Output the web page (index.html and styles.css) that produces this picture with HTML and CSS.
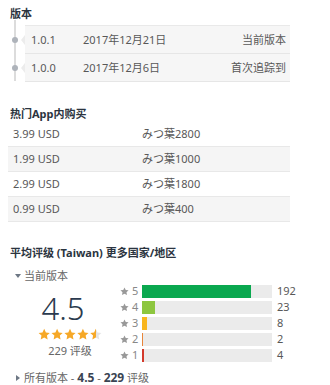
FILE: index.html
```html
<!DOCTYPE html>
<html lang="zh-CN">
<head>
    <meta charset="UTF-8">
    <title>App 详情</title>
    <link rel="stylesheet" href="styles.css">
</head>
<body>
    <div class="page">
        <section class="versions">
            <h2 class="title">版本</h2>
            <div class="timeline">
                <div class="version-row">
                    <span class="ver">1.0.1</span>
                    <span class="date">2017年12月21日</span>
                    <span class="note">当前版本</span>
                </div>
                <div class="version-row">
                    <span class="ver">1.0.0</span>
                    <span class="date">2017年12月6日</span>
                    <span class="note">首次追踪到</span>
                </div>
            </div>
        </section>

        <section class="iap">
            <h2 class="title">热门App内购买</h2>
            <div class="iap-row"><span class="price">3.99 USD</span><span class="item">みつ葉2800</span></div>
            <div class="iap-row"><span class="price">1.99 USD</span><span class="item">みつ葉1000</span></div>
            <div class="iap-row"><span class="price">2.99 USD</span><span class="item">みつ葉1800</span></div>
            <div class="iap-row"><span class="price">0.99 USD</span><span class="item">みつ葉400</span></div>
        </section>

        <section class="ratings">
            <h2 class="title">平均评级 (Taiwan) <a class="more">更多国家/地区</a></h2>
            <div class="toggle open">当前版本</div>
            <div class="rating-body">
                <div class="score">
                    <div class="score-num">4.5</div>
                    <div class="stars">
                        <svg width="64" height="13" viewBox="0 0 124 24">
                            <defs>
                                <linearGradient id="half">
                                    <stop offset="50%" stop-color="#f6a827"/>
                                    <stop offset="50%" stop-color="#e4e4e4"/>
                                </linearGradient>
                                <path id="star" d="M12 1l3.3 6.9 7.5 1-5.5 5.2 1.4 7.5L12 18l-6.7 3.6 1.4-7.5L1.2 8.9l7.5-1z"/>
                            </defs>
                            <use href="#star" fill="#f6a827"/>
                            <use href="#star" x="25" fill="#f6a827"/>
                            <use href="#star" x="50" fill="#f6a827"/>
                            <use href="#star" x="75" fill="#f6a827"/>
                            <use href="#star" x="100" fill="url(#half)"/>
                        </svg>
                    </div>
                    <div class="score-count">229 评级</div>
                </div>
                <div class="bars">
                    <div class="bar-row">
                        <span class="bar-label"><svg class="mini-star" viewBox="0 0 24 24"><path d="M12 1l3.3 6.9 7.5 1-5.5 5.2 1.4 7.5L12 18l-6.7 3.6 1.4-7.5L1.2 8.9l7.5-1z"/></svg>5</span>
                        <div class="bar-track"><div class="bar-fill five" style="width: 83.8%"></div></div>
                        <span class="bar-count">192</span>
                    </div>
                    <div class="bar-row">
                        <span class="bar-label"><svg class="mini-star" viewBox="0 0 24 24"><path d="M12 1l3.3 6.9 7.5 1-5.5 5.2 1.4 7.5L12 18l-6.7 3.6 1.4-7.5L1.2 8.9l7.5-1z"/></svg>4</span>
                        <div class="bar-track"><div class="bar-fill four" style="width: 10%"></div></div>
                        <span class="bar-count">23</span>
                    </div>
                    <div class="bar-row">
                        <span class="bar-label"><svg class="mini-star" viewBox="0 0 24 24"><path d="M12 1l3.3 6.9 7.5 1-5.5 5.2 1.4 7.5L12 18l-6.7 3.6 1.4-7.5L1.2 8.9l7.5-1z"/></svg>3</span>
                        <div class="bar-track"><div class="bar-fill three" style="width: 3.5%"></div></div>
                        <span class="bar-count">8</span>
                    </div>
                    <div class="bar-row">
                        <span class="bar-label"><svg class="mini-star" viewBox="0 0 24 24"><path d="M12 1l3.3 6.9 7.5 1-5.5 5.2 1.4 7.5L12 18l-6.7 3.6 1.4-7.5L1.2 8.9l7.5-1z"/></svg>2</span>
                        <div class="bar-track"><div class="bar-fill two" style="width: 0.9%"></div></div>
                        <span class="bar-count">2</span>
                    </div>
                    <div class="bar-row">
                        <span class="bar-label"><svg class="mini-star" viewBox="0 0 24 24"><path d="M12 1l3.3 6.9 7.5 1-5.5 5.2 1.4 7.5L12 18l-6.7 3.6 1.4-7.5L1.2 8.9l7.5-1z"/></svg>1</span>
                        <div class="bar-track"><div class="bar-fill one" style="width: 1.7%"></div></div>
                        <span class="bar-count">4</span>
                    </div>
                </div>
            </div>
            <div class="toggle closed">所有版本 - <b>4.5</b> - <b>229</b> 评级</div>
        </section>
    </div>
</body>
</html>
```

FILE: styles.css
```css
body {
    margin: 0;
    background: #fff;
    font-family: "Noto Sans", "Noto Sans CJK SC", sans-serif;
    font-size: 11px;
    line-height: 16px;
    color: #585858;
}

.page {
    width: 282px;
    padding: 6px 0 0 8px;
}

.title {
    margin: 0;
    padding-left: 2px;
    font-size: 11px;
    line-height: 16px;
    font-weight: bold;
    color: #2b3440;
}

.title .more {
    color: #2b3440;
}

/* version timeline */
.versions .title {
    margin-bottom: 3px;
}

.timeline {
    position: relative;
    padding-left: 17px;
}

.timeline::before {
    content: "";
    position: absolute;
    left: 6px;
    top: -5px;
    bottom: 1px;
    width: 2px;
    background: #dcdcdc;
}

.version-row {
    position: relative;
    display: flex;
    align-items: center;
    height: 27px;
    padding: 0 4px 0 6px;
    background: #f6f6f6;
    border-bottom: 1px solid #e6e6e6;
}

.version-row:first-child {
    border-top: 1px solid #e9e9e9;
}

.version-row::before {
    content: "";
    position: absolute;
    left: -4px;
    top: 50%;
    margin-top: -5px;
    border-top: 5px solid transparent;
    border-bottom: 5px solid transparent;
    border-right: 4px solid #ececec;
}

.version-row::after {
    content: "";
    position: absolute;
    left: -13px;
    top: 50%;
    margin-top: -3px;
    width: 6px;
    height: 6px;
    border-radius: 50%;
    background: #aeb3ba;
}

.ver {
    width: 52px;
}

.date {
    flex: 1;
}

.note {
    text-align: right;
}

/* in-app purchases */
.iap {
    margin-top: 24px;
}

.iap-row {
    display: flex;
    align-items: center;
    height: 24px;
    padding-left: 5px;
    border-bottom: 1px solid #e8e8e8;
}

.iap-row:nth-child(odd) {
    background: #f5f5f5;
}

.price {
    width: 129px;
}

/* ratings */
.ratings {
    margin-top: 23px;
}

.toggle {
    position: relative;
    padding-left: 16px;
    color: #666;
}

.toggle::before {
    content: "";
    position: absolute;
    top: 6px;
}

.toggle.open {
    margin-top: 7px;
}

.toggle.open::before {
    left: 7px;
    border-left: 3px solid transparent;
    border-right: 3px solid transparent;
    border-top: 4px solid #6d7784;
}

.toggle.closed {
    margin-top: 7px;
}

.toggle.closed::before {
    left: 8px;
    top: 5px;
    border-top: 3px solid transparent;
    border-bottom: 3px solid transparent;
    border-left: 4px solid #6d7784;
}

.toggle.closed b {
    color: #3a4452;
    font-size: 12px;
}

.rating-body {
    display: flex;
    width: 310px;
    margin-top: -1px;
}

.score {
    flex: none;
    width: 112px;
    text-align: center;
}

.score-num {
    margin-top: 10px;
    padding-right: 2px;
    font-size: 31px;
    line-height: 30px;
    color: #2a3a4e;
    font-weight: 300;
}

.stars {
    margin-top: 5px;
    padding-left: 12px;
    height: 13px;
}

.stars svg {
    display: inline-block;
    vertical-align: top;
}

.score-count {
    margin-top: 2px;
    padding-left: 12px;
    color: #666;
}

.bars {
    flex: none;
    display: flex;
    flex-direction: column;
}

.bar-row {
    display: flex;
    align-items: center;
    height: 16px;
}

.bar-label {
    display: flex;
    align-items: center;
    width: 22px;
    color: #888;
}

.mini-star {
    width: 9px;
    height: 9px;
    margin-right: 3px;
    fill: #999;
}

.bar-track {
    width: 130px;
    height: 13px;
    background: #ebebeb;
}

.bar-fill {
    height: 100%;
}

.bar-fill.five { background: #0aa84f; }
.bar-fill.four { background: #8dc63f; }
.bar-fill.three { background: #f8b51d; }
.bar-fill.two { background: #e8853a; }
.bar-fill.one { background: #d33a2c; }

.bar-count {
    margin-left: 5px;
}
```
